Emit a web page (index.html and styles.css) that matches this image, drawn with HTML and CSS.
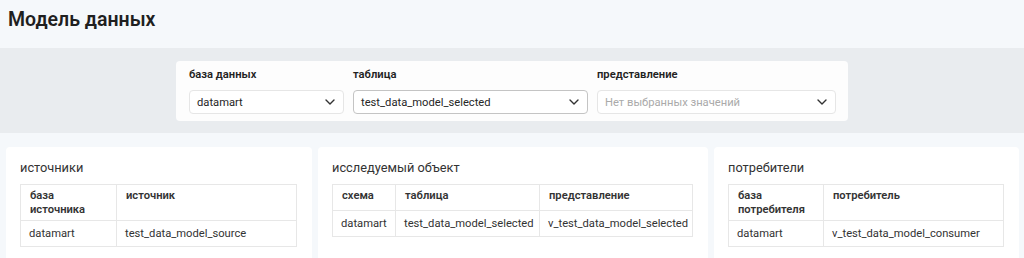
FILE: index.html
```html
<!DOCTYPE html>
<html lang="ru">
<head>
<meta charset="utf-8">
<title>Модель данных</title>
<link rel="stylesheet" href="styles.css">
</head>
<body>
<header class="header">
  <h1 class="title">Модель данных</h1>
</header>
<section class="filters">
  <div class="filter-card">
    <div class="field">
      <div class="label">база данных</div>
      <div class="select">
        <span class="value">datamart</span>
        <svg class="chev" width="10" height="6" viewBox="0 0 10 6"><path d="M1 1 L5 5 L9 1" fill="none" stroke="#333" stroke-width="1.4" stroke-linecap="round" stroke-linejoin="round"/></svg>
      </div>
    </div>
    <div class="field">
      <div class="label">таблица</div>
      <div class="select select-active">
        <span class="value">test_data_model_selected</span>
        <svg class="chev" width="10" height="6" viewBox="0 0 10 6"><path d="M1 1 L5 5 L9 1" fill="none" stroke="#333" stroke-width="1.4" stroke-linecap="round" stroke-linejoin="round"/></svg>
      </div>
    </div>
    <div class="field">
      <div class="label">представление</div>
      <div class="select">
        <span class="value placeholder">Нет выбранных значений</span>
        <svg class="chev" width="10" height="6" viewBox="0 0 10 6"><path d="M1 1 L5 5 L9 1" fill="none" stroke="#333" stroke-width="1.4" stroke-linecap="round" stroke-linejoin="round"/></svg>
      </div>
    </div>
  </div>
</section>
<section class="panels">
  <div class="card">
    <div class="card-title">источники</div>
    <table class="tbl">
      <thead><tr><th class="w96">база источника</th><th>источник</th></tr></thead>
      <tbody><tr><td>datamart</td><td>test_data_model_source</td></tr></tbody>
    </table>
  </div>
  <div class="card">
    <div class="card-title">исследуемый объект</div>
    <table class="tbl">
      <thead><tr><th class="w63">схема</th><th class="w144">таблица</th><th>представление</th></tr></thead>
      <tbody><tr><td>datamart</td><td>test_data_model_selected</td><td>v_test_data_model_selected</td></tr></tbody>
    </table>
  </div>
  <div class="card">
    <div class="card-title">потребители</div>
    <table class="tbl">
      <thead><tr><th class="w95">база потребителя</th><th>потребитель</th></tr></thead>
      <tbody><tr><td>datamart</td><td>v_test_data_model_consumer</td></tr></tbody>
    </table>
  </div>
</section>
</body>
</html>
```
FILE: styles.css
```css
html, body {
  margin: 0;
  padding: 0;
  background: #f5f8fb;
  font-family: Roboto, "Liberation Sans", sans-serif;
  color: #262626;
}
.header {
  height: 48px;
  background: #f5f8fb;
  padding-left: 8px;
  box-sizing: border-box;
  display: flex;
  align-items: center;
}
.title {
  margin: 0;
  font-size: 19.5px;
  font-weight: 600;
  color: #1f1f1f;
  line-height: 24px;
  padding-bottom: 8px;
}
.filters {
  height: 85px;
  background: #e9ecef;
  padding-top: 13px;
  box-sizing: border-box;
  display: flex;
  justify-content: center;
}
.filter-card {
  width: 672px;
  height: 60px;
  box-sizing: border-box;
  background: #fdfdfd;
  border-radius: 4px;
  padding: 7px 12px 0 13px;
  display: grid;
  grid-template-columns: 155px 235px 239px;
  column-gap: 9px;
}
.label {
  font-size: 11.2px;
  font-weight: 600;
  line-height: 14px;
  color: #222;
  margin-bottom: 8px;
}
.select {
  height: 24px;
  box-sizing: border-box;
  border: 1px solid #e6e6e6;
  border-radius: 4px;
  padding: 0 8px 0 7px;
  display: flex;
  align-items: center;
  justify-content: space-between;
  background: #fff;
}
.select-active {
  border-color: #c4c4c4;
}
.value {
  font-size: 11.2px;
  color: #262626;
}
.placeholder {
  color: #aaaaaa;
}
.chev {
  display: block;
}
.panels {
  display: grid;
  grid-template-columns: 306px 390px 305px;
  column-gap: 6px;
  padding: 14px 5px 0 6px;
}
.card {
  background: #fff;
  border-radius: 4px;
  padding: 13px 15px 20px 14px;
  min-height: 120px;
}
.card-title {
  font-size: 12.8px;
  line-height: 16px;
  color: #333;
  margin-bottom: 8px;
}
.tbl {
  width: 100%;
  table-layout: fixed;
  border-collapse: collapse;
  border: 1px solid #e7e7e7;
  font-size: 11.2px;
  color: #333;
}
.tbl th, .tbl td {
  border: 1px solid #e7e7e7;
  text-align: left;
  white-space: nowrap;
}
.tbl th {
  font-weight: 600;
  line-height: 14px;
  height: 18px;
  padding: 4px 9px 3px 9px;
  vertical-align: top;
  white-space: normal;
}
.tbl td {
  padding: 6px 8px 6px 8px;
  line-height: 13px;
  vertical-align: middle;
}
.w96 { width: 77px; }
.w95 { width: 76px; }
.w63 { width: 44px; }
.w144 { width: 125px; }
```
